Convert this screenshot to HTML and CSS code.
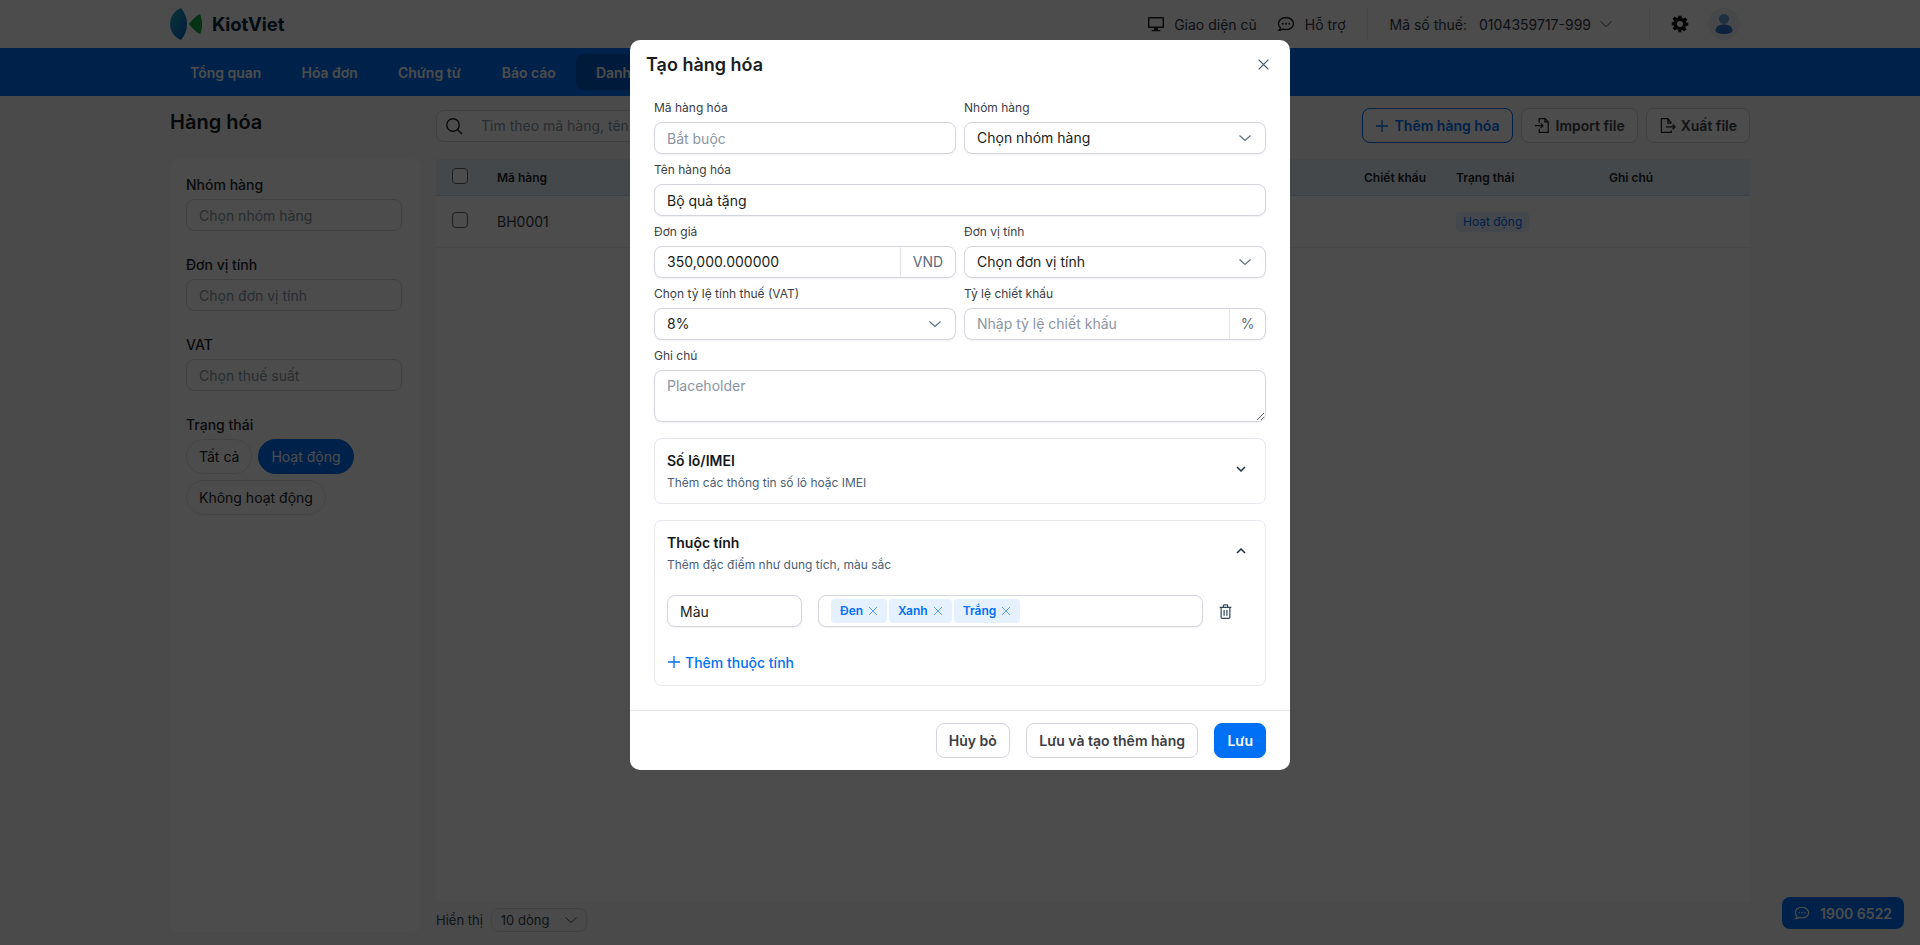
FILE: index.html
```html
<!DOCTYPE html>
<html lang="vi">
<head>
<meta charset="utf-8">
<title>Hàng hóa</title>
<link rel="stylesheet" href="styles.css">
</head>
<body>
<header class="topbar">
  <div class="brand">
    <svg class="brand-mark" viewBox="0 0 34 32" aria-hidden="true">
      <defs><linearGradient id="lens" x1="0" y1="0" x2="1" y2="1"><stop offset="0" stop-color="#21b0c8"/><stop offset="1" stop-color="#0b5cc4"/></linearGradient></defs>
      <path fill="url(#lens)" d="M11 0C4 3 0 9 0 16c0 7 4 13 11 16 4-5 6-10 6-16S15 5 11 0Z"/>
      <path fill="#12a83c" d="M30 6c2.500 6 3 14 0 20-4-2-8-6-11-10 3-4 7-8 11-10Z"/>
    </svg>
    <span class="brand-name">KiotViet</span>
  </div>
  <div class="top-actions">
    <svg class="ico18" viewBox="0 0 18 18" aria-hidden="true"><path fill="none" stroke="#222" stroke-width="1.500" d="M1.750 2.750h14.500v9.500H1.750z"/><path fill="#222" d="M7 13h4v2H7zM4.500 15h9v1.300h-9z"/></svg>
    <span class="top-text">Giao diện cũ</span>
    <svg class="ico18 chat-ico" viewBox="0 0 18 18" aria-hidden="true"><path fill="none" stroke="#222" stroke-width="1.400" d="M9 2.500c-4.300 0-7.500 2.800-7.500 6.200 0 1.600.7 3 1.900 4.100-.1.900-.6 1.800-1.300 2.500 1.500 0 2.800-.5 3.800-1.300 1 .4 2 .6 3.100.6 4.300 0 7.500-2.700 7.500-5.900S13.300 2.500 9 2.500Z"/><circle cx="5.800" cy="8.700" r="1" fill="#222"/><circle cx="9" cy="8.700" r="1" fill="#222"/><circle cx="12.200" cy="8.700" r="1" fill="#222"/></svg>
    <span class="top-text">Hỗ trợ</span>
    <span class="top-sep tax-sep"></span>
    <span class="top-text tax-label">Mã số thuế:</span>
    <span class="top-text tax-value">0104359717-999</span>
    <svg class="chev12" viewBox="0 0 12 12" aria-hidden="true"><path fill="none" stroke="#555" stroke-width="1" d="M.5 3.500 6 8.500l5.500-5"/></svg>
    <span class="top-sep user-sep"></span>
    <svg class="gear" viewBox="0 0 24 24" aria-hidden="true"><path fill="#111" fill-rule="evenodd" d="M10 1h4l.6 3.100 1.700.7 2.600-1.800 2.900 2.900-1.800 2.600.7 1.700L23 10v4l-3.300.6-.7 1.700 1.800 2.600-2.900 2.900-2.600-1.800-1.700.7L14 23h-4l-.6-3.300-1.700-.7-2.600 1.800-2.900-2.900L4 15.300l-.7-1.700L1 14v-4l2.300-.6.700-1.700L2.200 5l2.900-2.900 2.600 1.800 1.700-.7L10 1Zm2 7a4 4 0 1 0 0 8 4 4 0 0 0 0-8Z"/></svg>
    <span class="avatar"><svg viewBox="0 0 32 32" aria-hidden="true"><circle cx="16" cy="11" r="5" fill="#6aa0e0"/><path fill="#2a74d0" d="M7.500 22.500c0-4 4-6 8.500-6s8.500 2 8.500 6c0 2-3.800 3.500-8.500 3.500s-8.500-1.500-8.500-3.500Z"/></svg></span>
  </div>
</header>

<nav class="mainnav">
  <a class="nav-item">Tổng quan</a>
  <a class="nav-item">Hóa đơn</a>
  <a class="nav-item nav-item-wide">Chứng từ</a>
  <a class="nav-item">Báo cáo</a>
  <a class="nav-item is-active">Danh mục</a>
</nav>

<main class="page">
  <h1 class="page-title">Hàng hóa</h1>
  <div class="toolbar">
    <label class="search">
      <svg class="ico18" viewBox="0 0 18 18" aria-hidden="true"><circle cx="8" cy="8" r="6.200" fill="none" stroke="#222" stroke-width="1.400"/><path stroke="#222" stroke-width="1.400" d="m12.500 12.500 4.500 4.500"/></svg>
      <input class="search-input" type="text" placeholder="Tìm theo mã hàng, tên hàng">
    </label>
    <button class="btn btn-outline-primary" type="button"><svg class="ico14" viewBox="0 0 14 14" aria-hidden="true"><path stroke="currentColor" stroke-width="1.300" d="M7 1v12M1 7h12"/></svg>Thêm hàng hóa</button>
    <button class="btn" type="button"><svg class="ico16" viewBox="0 0 18 18" aria-hidden="true"><path fill="none" stroke="#222" stroke-width="1.300" d="M5.500 6V1.700h6.200l3.300 3.300v11.300H5.500V12.500M11.500 1.700v3.500H15M1 9.200h8M7 6.700l2.500 2.500L7 11.700"/></svg>Import file</button>
    <button class="btn" type="button"><svg class="ico16" viewBox="0 0 18 18" aria-hidden="true"><path fill="none" stroke="#222" stroke-width="1.300" d="M13 6.500 9.500 1.700H2.500v14.600H13v-2M9.500 1.700v4.800H13M7.500 10.500H17M14.500 8l2.500 2.500-2.500 2.500"/></svg>Xuất file</button>
  </div>

  <aside class="filters">
    <div class="filter-group">
      <div class="filter-label">Nhóm hàng</div>
      <input class="filter-input" type="text" placeholder="Chọn nhóm hàng">
    </div>
    <div class="filter-group">
      <div class="filter-label">Đơn vị tính</div>
      <input class="filter-input" type="text" placeholder="Chọn đơn vị tính">
    </div>
    <div class="filter-group">
      <div class="filter-label">VAT</div>
      <input class="filter-input" type="text" placeholder="Chọn thuế suất">
    </div>
    <div class="filter-group">
      <div class="filter-label">Trạng thái</div>
      <div class="chips">
        <span class="chip">Tất cả</span>
        <span class="chip is-on">Hoạt động</span>
        <span class="chip">Không hoạt động</span>
      </div>
    </div>
  </aside>

  <section class="content">
    <div class="table">
      <div class="t-row t-head">
        <span class="check"></span>
        <span>Mã hàng</span>
        <span>Chiết khấu</span>
        <span>Trạng thái</span>
        <span>Ghi chú</span>
      </div>
      <div class="t-row t-body">
        <span class="check"></span>
        <span>BH0001</span>
        <span></span>
        <span><span class="badge">Hoạt động</span></span>
        <span></span>
      </div>
    </div>
    <div class="pager">
      <span>Hiển thị</span>
      <span class="pager-select">10 dòng<svg class="chev12" viewBox="0 0 12 12" aria-hidden="true"><path fill="none" stroke="#555" stroke-width="1" d="M.5 3.500 6 8.500l5.500-5"/></svg></span>
    </div>
  </section>
</main>

<div class="hotline"><svg class="ico18" viewBox="0 0 18 18" aria-hidden="true"><path fill="none" stroke="#fff" stroke-width="1.400" d="M9 2.500c-4.300 0-7.500 2.800-7.500 6.200 0 1.600.7 3 1.900 4.100-.1.900-.6 1.800-1.300 2.500 1.500 0 2.800-.5 3.800-1.300 1 .4 2 .6 3.100.6 4.300 0 7.500-2.700 7.500-5.900S13.300 2.500 9 2.500Z"/><circle cx="5.800" cy="8.700" r=".9" fill="#fff"/><circle cx="9" cy="8.700" r=".9" fill="#fff"/><circle cx="12.200" cy="8.700" r=".9" fill="#fff"/></svg>1900 6522</div>

<div class="overlay">
  <div class="modal" role="dialog" aria-label="Tạo hàng hóa">
    <div class="modal-head">
      <h2 class="modal-title">Tạo hàng hóa</h2>
      <svg class="close" viewBox="0 0 12 12" aria-hidden="true"><path stroke="#4a5f75" stroke-width="1.300" d="m1.500 1.500 9 9M10.500 1.500l-9 9"/></svg>
    </div>
    <div class="modal-body">
      <div class="form-grid">
        <div class="field">
          <label class="field-label">Mã hàng hóa</label>
          <input class="control" type="text" placeholder="Bắt buộc">
        </div>
        <div class="field">
          <label class="field-label">Nhóm hàng</label>
          <div class="control control-select">Chọn nhóm hàng<svg class="chev12" viewBox="0 0 12 12" aria-hidden="true"><path fill="none" stroke="#5c6b7c" stroke-width="1.100" d="M.5 3.500 6 8.500l5.500-5"/></svg></div>
        </div>
        <div class="field field-wide">
          <label class="field-label">Tên hàng hóa</label>
          <input class="control" type="text" value="Bộ quà tặng">
        </div>
        <div class="field">
          <label class="field-label">Đơn giá</label>
          <div class="control control-addon">
            <input class="bare" type="text" value="350,000.000000">
            <span class="addon addon-wide">VND</span>
          </div>
        </div>
        <div class="field">
          <label class="field-label">Đơn vị tính</label>
          <div class="control control-select">Chọn đơn vị tính<svg class="chev12" viewBox="0 0 12 12" aria-hidden="true"><path fill="none" stroke="#5c6b7c" stroke-width="1.100" d="M.5 3.500 6 8.500l5.500-5"/></svg></div>
        </div>
        <div class="field">
          <label class="field-label">Chọn tỷ lệ tính thuế (VAT)</label>
          <div class="control control-select">8%<svg class="chev12" viewBox="0 0 12 12" aria-hidden="true"><path fill="none" stroke="#5c6b7c" stroke-width="1.100" d="M.5 3.500 6 8.500l5.500-5"/></svg></div>
        </div>
        <div class="field">
          <label class="field-label">Tỷ lệ chiết khấu</label>
          <div class="control control-addon">
            <input class="bare" type="text" placeholder="Nhập tỷ lệ chiết khấu">
            <span class="addon">%</span>
          </div>
        </div>
        <div class="field field-wide">
          <label class="field-label">Ghi chú</label>
          <textarea class="control control-area" placeholder="Placeholder"></textarea>
        </div>
      </div>

      <section class="panel">
        <div class="panel-head">
          <div>
            <div class="panel-title">Số lô/IMEI</div>
            <div class="panel-sub">Thêm các thông tin số lô hoặc IMEI</div>
          </div>
          <svg class="panel-chev" viewBox="0 0 24 24" aria-hidden="true"><path fill="none" stroke="#1f2d3d" stroke-width="1.500" d="m8 10 4 4 4-4"/></svg>
        </div>
      </section>

      <section class="panel">
        <div class="panel-head">
          <div>
            <div class="panel-title">Thuộc tính</div>
            <div class="panel-sub">Thêm đặc điểm như dung tích, màu sắc</div>
          </div>
          <svg class="panel-chev" viewBox="0 0 24 24" aria-hidden="true"><path fill="none" stroke="#1f2d3d" stroke-width="1.500" d="m8 14 4-4 4 4"/></svg>
        </div>
        <div class="attr-row">
          <input class="control attr-name" type="text" value="Màu">
          <div class="control tags">
            <span class="tag">Đen<svg class="tag-x" viewBox="0 0 10 10" aria-hidden="true"><path stroke="currentColor" d="m1 1 8 8M9 1 1 9"/></svg></span>
            <span class="tag">Xanh<svg class="tag-x" viewBox="0 0 10 10" aria-hidden="true"><path stroke="currentColor" d="m1 1 8 8M9 1 1 9"/></svg></span>
            <span class="tag">Trắng<svg class="tag-x" viewBox="0 0 10 10" aria-hidden="true"><path stroke="currentColor" d="m1 1 8 8M9 1 1 9"/></svg></span>
          </div>
          <svg class="trash" viewBox="0 0 14 16" aria-hidden="true"><path fill="none" stroke="#33465a" stroke-width="1.300" d="M2.300 4v10.200c0 .7.500 1.200 1.200 1.200h7c.7 0 1.200-.5 1.200-1.200V4M.7 3.600h12.600M4.700 3.400V1.600c0-.4.300-.7.700-.7h3.200c.4 0 .7.300.7.700v1.800M5.500 6.500v6M8.500 6.500v6"/></svg>
        </div>
        <div class="attr-add"><svg class="ico14" viewBox="0 0 14 14" aria-hidden="true"><path stroke="currentColor" stroke-width="1.300" d="M7 1v12M1 7h12"/></svg>Thêm thuộc tính</div>
      </section>
    </div>
    <div class="modal-foot">
      <button class="foot-btn" type="button">Hủy bỏ</button>
      <button class="foot-btn foot-wide" type="button">Lưu và tạo thêm hàng</button>
      <button class="foot-btn foot-primary" type="button">Lưu</button>
    </div>
  </div>
</div>
</body>
</html>
```
FILE: styles.css
```css
* { box-sizing: border-box; }
html, body { height: 100%; }
body {
  margin: 0;
  height: 100vh;
  overflow: hidden;
  display: flex;
  flex-direction: column;
  background: #f7f8fa;
  color: #1a1d21;
  font-family: Inter, "Noto Sans", sans-serif;
  font-size: 14px;
}
input, textarea, button { font: inherit; color: inherit; }
input::placeholder, textarea::placeholder { color: #8a94a3; opacity: 1; }
svg { display: block; flex: none; }

.ico14 { width: 14px; height: 14px; }
.ico16 { width: 17px; height: 17px; }
.ico18 { width: 18px; height: 18px; }
.chev12 { width: 12px; height: 12px; }

/* Top bar */
.topbar {
  height: 48px;
  flex: none;
  display: flex;
  align-items: center;
  justify-content: space-between;
  padding: 0 180px 0 170px;
  background: #fff;
}
.brand { display: flex; align-items: center; gap: 8px; }
.brand-mark { width: 34px; height: 32px; }
.brand-name { font-size: 18.500px; font-weight: 700; color: #0b2545; letter-spacing: -.1px; }
.top-actions { display: flex; align-items: center; }
.top-text { color: #33383f; white-space: nowrap; }
.top-actions > .ico18:first-child { margin-right: 9px; }
.chat-ico { margin: 0 10px 0 20px; }
.top-sep { width: 1px; height: 30px; background: #e8e9ec; }
.tax-sep { margin: 0 22px 0 21px; }
.tax-value { margin: 0 9px 0 12px; }
.user-sep { margin: 0 21px 0 37px; }
.gear { width: 18px; height: 18px; margin-right: 19px; }
.avatar {
  width: 32px; height: 32px;
  border-radius: 50%;
  background: #eef0f3;
}
.avatar svg { width: 32px; height: 32px; }

/* Nav */
.mainnav {
  height: 48px;
  flex: none;
  display: flex;
  align-items: center;
  padding-left: 170px;
  background: #0070f4;
}
.nav-item {
  height: 36px;
  display: flex;
  align-items: center;
  padding: 0 20px;
  border-radius: 8px;
  color: #fff;
  font-weight: 600;
}
.nav-item-wide { padding-right: 21px; }
.is-active { background: #0059c8; }

/* Page */
.page {
  flex: 1;
  min-height: 0;
  display: grid;
  grid-template-columns: 250px 1fr;
  grid-template-rows: 35px 1fr;
  column-gap: 16px;
  row-gap: 16px;
  padding: 12px 170px 13px;
}
.page-title { margin: 0; font-size: 20px; font-weight: 600; line-height: 28px; }
.toolbar { display: flex; align-items: center; gap: 8px; }
.search {
  width: 560px;
  height: 32px;
  margin-right: auto;
  display: flex;
  align-items: center;
  gap: 18px;
  padding-left: 8px;
  border: 1px solid #d5d8dd;
  border-radius: 8px;
  background: #fff;
}
.search-input { flex: 1; border: 0; outline: 0; background: none; padding: 0; }
.btn {
  height: 35px;
  display: flex;
  align-items: center;
  gap: 5px;
  padding: 0 12px;
  border: 1px solid #d5d8dd;
  border-radius: 8px;
  background: #fff;
  color: #3c4046;
  font-weight: 600;
  white-space: nowrap;
}
.btn-outline-primary { border-color: #0070f4; color: #0070f4; gap: 6px; padding: 0 12px; }

/* Filters */
.filters {
  display: flex;
  flex-direction: column;
  gap: 24px;
  padding: 16px 18px 16px 16px;
  border-radius: 8px;
  background: #fff;
}
.filter-label { margin-bottom: 4px; height: 20px; line-height: 20px; font-weight: 500; color: #22262b; }
.filter-input {
  display: block;
  width: 100%;
  height: 32px;
  padding: 0 12px;
  border: 1px solid #d5d8dd;
  border-radius: 8px;
  background: #fff;
  outline: 0;
}
.chips { display: flex; flex-wrap: wrap; gap: 6px; }
.chip {
  height: 35px;
  display: flex;
  align-items: center;
  padding: 0 12px;
  border: 1px solid #e3e5e8;
  border-radius: 18px;
  color: #22262b;
}
.chip.is-on { background: #0070f4; border-color: #0070f4; color: #fff; }

/* Table */
.content { display: flex; flex-direction: column; min-width: 0; }
.table { flex: 1; background: #fff; border-radius: 8px 8px 0 0; }
.t-row {
  display: grid;
  grid-template-columns: 61px 867px 92px 153px 141px;
  align-items: center;
}
.t-head {
  height: 37px;
  background: #e8f0f9;
  border-bottom: 1px solid #c6dbf3;
  font-size: 12px;
  font-weight: 600;
  color: #22262b;
}
.t-body { height: 52px; border-bottom: 1px solid #eceef1; color: #33383f; }
.check {
  width: 16px; height: 16px;
  margin: 0 0 3px 16px;
  border: 1px solid #5e6770;
  border-radius: 4px;
  background: #fff;
}
.badge {
  display: inline-block;
  height: 20px;
  padding: 0 7px;
  line-height: 20px;
  border-radius: 4px;
  background: #e3effd;
  color: #0070f4;
  font-size: 12px;
}
.pager { display: flex; align-items: center; gap: 8px; height: 24px; margin-top: 6px; font-size: 13px; color: #3c4046; }
.pager-select {
  width: 96px;
  height: 24px;
  display: flex;
  align-items: center;
  justify-content: space-between;
  padding: 0 9px;
  border: 1px solid #d5d8dd;
  border-radius: 8px;
}

.hotline {
  position: fixed;
  right: 16px;
  bottom: 16px;
  width: 122px;
  height: 32px;
  display: flex;
  align-items: center;
  gap: 10px;
  padding-left: 12px;
  border-radius: 8px;
  background: #0070f4;
  color: #fff;
  font-weight: 600;
}
.hotline svg { width: 16px; height: 16px; }

/* Modal */
.overlay {
  position: fixed;
  inset: 0;
  display: flex;
  justify-content: center;
  align-items: flex-start;
  padding-top: 40px;
  background: rgba(0, 0, 0, .7);
}
.modal {
  width: 660px;
  border-radius: 10px;
  background: #fff;
  color: #1a1d21;
}
.modal-head {
  height: 48px;
  display: flex;
  align-items: center;
  justify-content: space-between;
  padding: 0 20px 0 16px;
}
.modal-title { margin: 0; font-size: 18px; font-weight: 600; }
.close { width: 13px; height: 13px; }
.modal-body { padding: 12px 24px 24px; }
.form-grid { display: grid; grid-template-columns: 1fr 1fr; gap: 8px; }
.field { min-width: 0; }
.field-wide { grid-column: 1 / -1; }
.field-label { display: block; height: 16px; margin-bottom: 6px; font-size: 12px; line-height: 16px; color: #3c4046; }
.control {
  display: block;
  width: 100%;
  height: 32px;
  padding: 0 12px;
  border: 1px solid #d3d5dc;
  border-radius: 8px;
  background: #fff;
  outline: 0;
  box-shadow: 0 1px 2px rgba(16, 24, 40, .06);
  line-height: 30px;
}
.control-select { display: flex; align-items: center; justify-content: space-between; padding-right: 14px; }
.control-addon { display: flex; align-items: center; padding-right: 0; }
.bare { flex: 1; min-width: 0; border: 0; outline: 0; padding: 0; background: none; }
.addon {
  flex: none;
  width: 36px;
  height: 30px;
  border-left: 1px solid #e6e7eb;
  text-align: center;
  color: #5c6b7c;
}
.addon-wide { width: 55px; }
.control-area { height: 52px; padding: 5px 12px; line-height: 20px; resize: vertical; }

.panel {
  margin-top: 16px;
  border: 1px solid #e8e9ee;
  border-radius: 8px;
}
.panel-head {
  display: flex;
  align-items: center;
  justify-content: space-between;
  padding: 12px;
}
.panel-title { height: 20px; line-height: 20px; font-weight: 600; color: #14171a; }
.panel-sub { height: 16px; margin-top: 4px; font-size: 12px; line-height: 16px; color: #4a5f75; }
.panel-chev { width: 24px; height: 24px; margin-bottom: 4px; }
.attr-row {
  display: flex;
  align-items: center;
  padding: 0 12px;
  margin-top: 10px;
}
.attr-name { width: 135px; flex: none; margin-right: 16px; }
.tags {
  width: 385px;
  flex: none;
  display: flex;
  align-items: center;
  gap: 2px;
  padding: 0 12px;
}
.tag {
  height: 24px;
  display: flex;
  align-items: center;
  gap: 5px;
  padding: 0 9px;
  border-radius: 4px;
  background: #e5f1fe;
  color: #0070f4;
  font-size: 12px;
  font-weight: 600;
  line-height: 1;
}
.tag-x { width: 10px; height: 10px; color: #5ea2f5; }
.trash { width: 13px; height: 15px; margin-left: 16px; }
.attr-add {
  display: flex;
  align-items: center;
  gap: 4px;
  height: 24px;
  margin: 23px 12px 11px;
  color: #0070f4;
  font-weight: 500;
}

.modal-foot {
  height: 60px;
  display: flex;
  align-items: center;
  justify-content: flex-end;
  gap: 16px;
  padding: 0 24px;
  border-top: 1px solid #e8e9ee;
}
.foot-btn {
  height: 35px;
  padding: 0 12px;
  border: 1px solid #d3d5dc;
  border-radius: 8px;
  background: #fff;
  color: #3c4046;
  font-weight: 600;
  white-space: nowrap;
}
.foot-wide { padding: 0 12.500px; }
.foot-primary { border-color: #0070f4; background: #0070f4; color: #fff; }
```
